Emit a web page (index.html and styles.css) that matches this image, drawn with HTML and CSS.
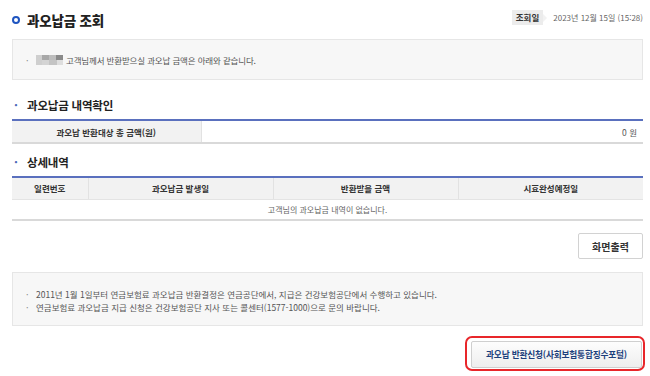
FILE: index.html
```html
<!DOCTYPE html>
<html lang="ko">
<head>
<meta charset="utf-8">
<title>과오납금 조회</title>
<link rel="stylesheet" href="styles.css">
</head>
<body>
<div class="page">
  <header class="top">
    <h1 class="title"><span class="ring"></span>과오납금 조회</h1>
    <div class="when"><span class="badge">조회일</span><span class="date">2023년 12월 15일 (15:28)</span></div>
  </header>

  <div class="infobox">
    <p class="line"><span class="dot">·</span><span class="mosaic"><i class="m1"></i><i class="m2"></i><i class="m3"></i><i class="m4"></i></span>고객님께서 반환받으실 과오납 금액은 아래와 같습니다.</p>
  </div>

  <h2 class="sub"><span class="sdot">·</span>과오납금 내역확인</h2>
  <table class="tbl sum">
    <tr>
      <th class="lbl">과오납 반환대상 총 금액(원)</th>
      <td class="val">0 원</td>
    </tr>
  </table>

  <h2 class="sub sub2"><span class="sdot">·</span>상세내역</h2>
  <table class="tbl detail">
    <colgroup><col class="c1"><col class="c2"><col class="c3"><col class="c4"></colgroup>
    <thead>
      <tr><th>일련번호</th><th>과오납금 발생일</th><th>반환받을 금액</th><th>시효완성예정일</th></tr>
    </thead>
    <tbody>
      <tr><td colspan="4" class="empty">고객님의 과오납금 내역이 없습니다.</td></tr>
    </tbody>
  </table>

  <div class="actions"><button class="btn-print">화면출력</button></div>

  <div class="notice">
    <p class="line"><span class="dot">·</span>2011년 1월 1일부터 연금보험료 과오납금 반환결정은 연금공단에서, 지급은 건강보험공단에서 수행하고 있습니다.</p>
    <p class="line"><span class="dot">·</span>연금보험료 과오납금 지급 신청은 건강보험공단 지사 또는 콜센터(1577-1000)으로 문의 바랍니다.</p>
  </div>

  <div class="bottom">
    <div class="hl"><button class="btn-apply">과오납 반환신청(사회보험통합징수포털)</button></div>
  </div>
</div>
</body>
</html>
```

FILE: styles.css
```css
* { box-sizing: border-box; }
html, body { margin: 0; padding: 0; background: #fff; }
body { font-family: "Noto Sans CJK KR", "Noto Sans", sans-serif; color: #444; font-size: 9px; }
.page { width: 650px; padding: 0 7px 0 12px; }

.top { height: 39px; display: flex; align-items: center; justify-content: space-between; }
.title { margin: 0; font-size: 13.5px; font-weight: 900; color: #222; display: flex; align-items: center; letter-spacing: -0.2px; }
.ring { width: 8px; height: 8px; border: 2px solid #1f55c0; border-radius: 50%; margin-right: 7px; }
.when { display: flex; align-items: center; margin-top: -4px; }
.badge { background: #ececec; color: #333; font-weight: 700; font-size: 8.5px; padding: 0 4px; height: 15px; line-height: 15px; position: relative; margin-right: 10px; }
.badge::after { content: ""; position: absolute; right: -4px; top: 4px; border-left: 4px solid #f2f2f2; border-top: 4px solid transparent; border-bottom: 4px solid transparent; }
.date { color: #666; font-size: 8px; }

.infobox { height: 41px; background: #f7f7f7; border: 1px solid #e6e6e6; display: flex; align-items: center; padding-left: 13px; padding-top: 1px; }
.line { margin: 0; font-size: 8.5px; color: #555; line-height: 13px; height: 13px; display: flex; align-items: center; }
.dot { width: 10px; color: #888; font-size: 9px; line-height: 13px; }
.infobox .line { letter-spacing: -0.15px; }
.mosaic { display: inline-grid; grid-template-columns: 6px 7px 7px 7px; grid-template-rows: 5px 5px; margin-right: 3px; }
.mosaic i { display: block; }
.m1 { background: #cfcfcf; grid-row: 1 / 3; }
.m2 { background: #a8a8a8; }
.m3 { background: #bdbdbd; }
.m4 { background: #8a8a8a; }
.mosaic::after { content: ""; grid-column: 2 / 5; grid-row: 2; background: linear-gradient(90deg, #d4d4d4 0 35%, #c4c4c4 35% 70%, #dedede 70%); }

.sub { margin: 16px 0 5px; height: 18px; line-height: 18px; font-size: 11.5px; font-weight: 700; color: #222; display: flex; align-items: center; letter-spacing: -0.2px; }
.sdot { width: 15px; padding-left: 2px; color: #4a67b8; font-size: 12px; }
.sub2 { margin-top: 9px; }

.tbl { width: 100%; border-collapse: collapse; border-top: 2px solid #5a70be; border-bottom: 2px solid #d9d9d9; table-layout: fixed; }
.tbl th, .tbl td { font-size: 8.5px; padding: 0; }
.sum .lbl { width: 189px; height: 23px; background: #f2f2f2; color: #333; font-weight: 700; border-right: 1px solid #e2e2e2; }
.sum .val { text-align: right; padding-right: 6px; color: #555; }
.detail .c1 { width: 76px; } .detail .c2 { width: 185px; } .detail .c3 { width: 185px; } .detail .c4 { width: auto; }
.detail th { height: 22px; background: #f2f2f2; color: #333; font-weight: 700; border-left: 1px solid #e2e2e2; border-bottom: 1px solid #e4e4e4; }
.detail th:first-child { border-left: none; }
.detail .empty { height: 21px; text-align: center; color: #666; font-size: 8px; }

.actions { display: flex; justify-content: flex-end; margin-top: 12px; }
.btn-print { width: 65px; height: 26px; background: #fff; border: 1px solid #d2d2d2; border-radius: 2px; font-family: inherit; font-size: 10px; font-weight: 700; color: #333; padding: 0; }

.notice { margin-top: 13px; height: 54px; background: #f7f7f7; border: 1px solid #e6e6e6; padding: 15px 0 0 13px; }
.notice .line { font-size: 8.5px; }

.bottom { display: flex; justify-content: flex-end; margin-top: 10px; margin-right: -2px; }
.hl { border: 2px solid #e8262a; border-radius: 7px; padding: 3px 1px 1px 4px; }
.btn-apply { width: 171px; height: 27px; background: linear-gradient(#fdfdfd, #eeeeee); border: 1px solid #cfcfcf; border-radius: 2px; font-family: inherit; font-size: 8.7px; font-weight: 700; color: #1c3f7c; padding: 0; letter-spacing: -0.2px; }
```
